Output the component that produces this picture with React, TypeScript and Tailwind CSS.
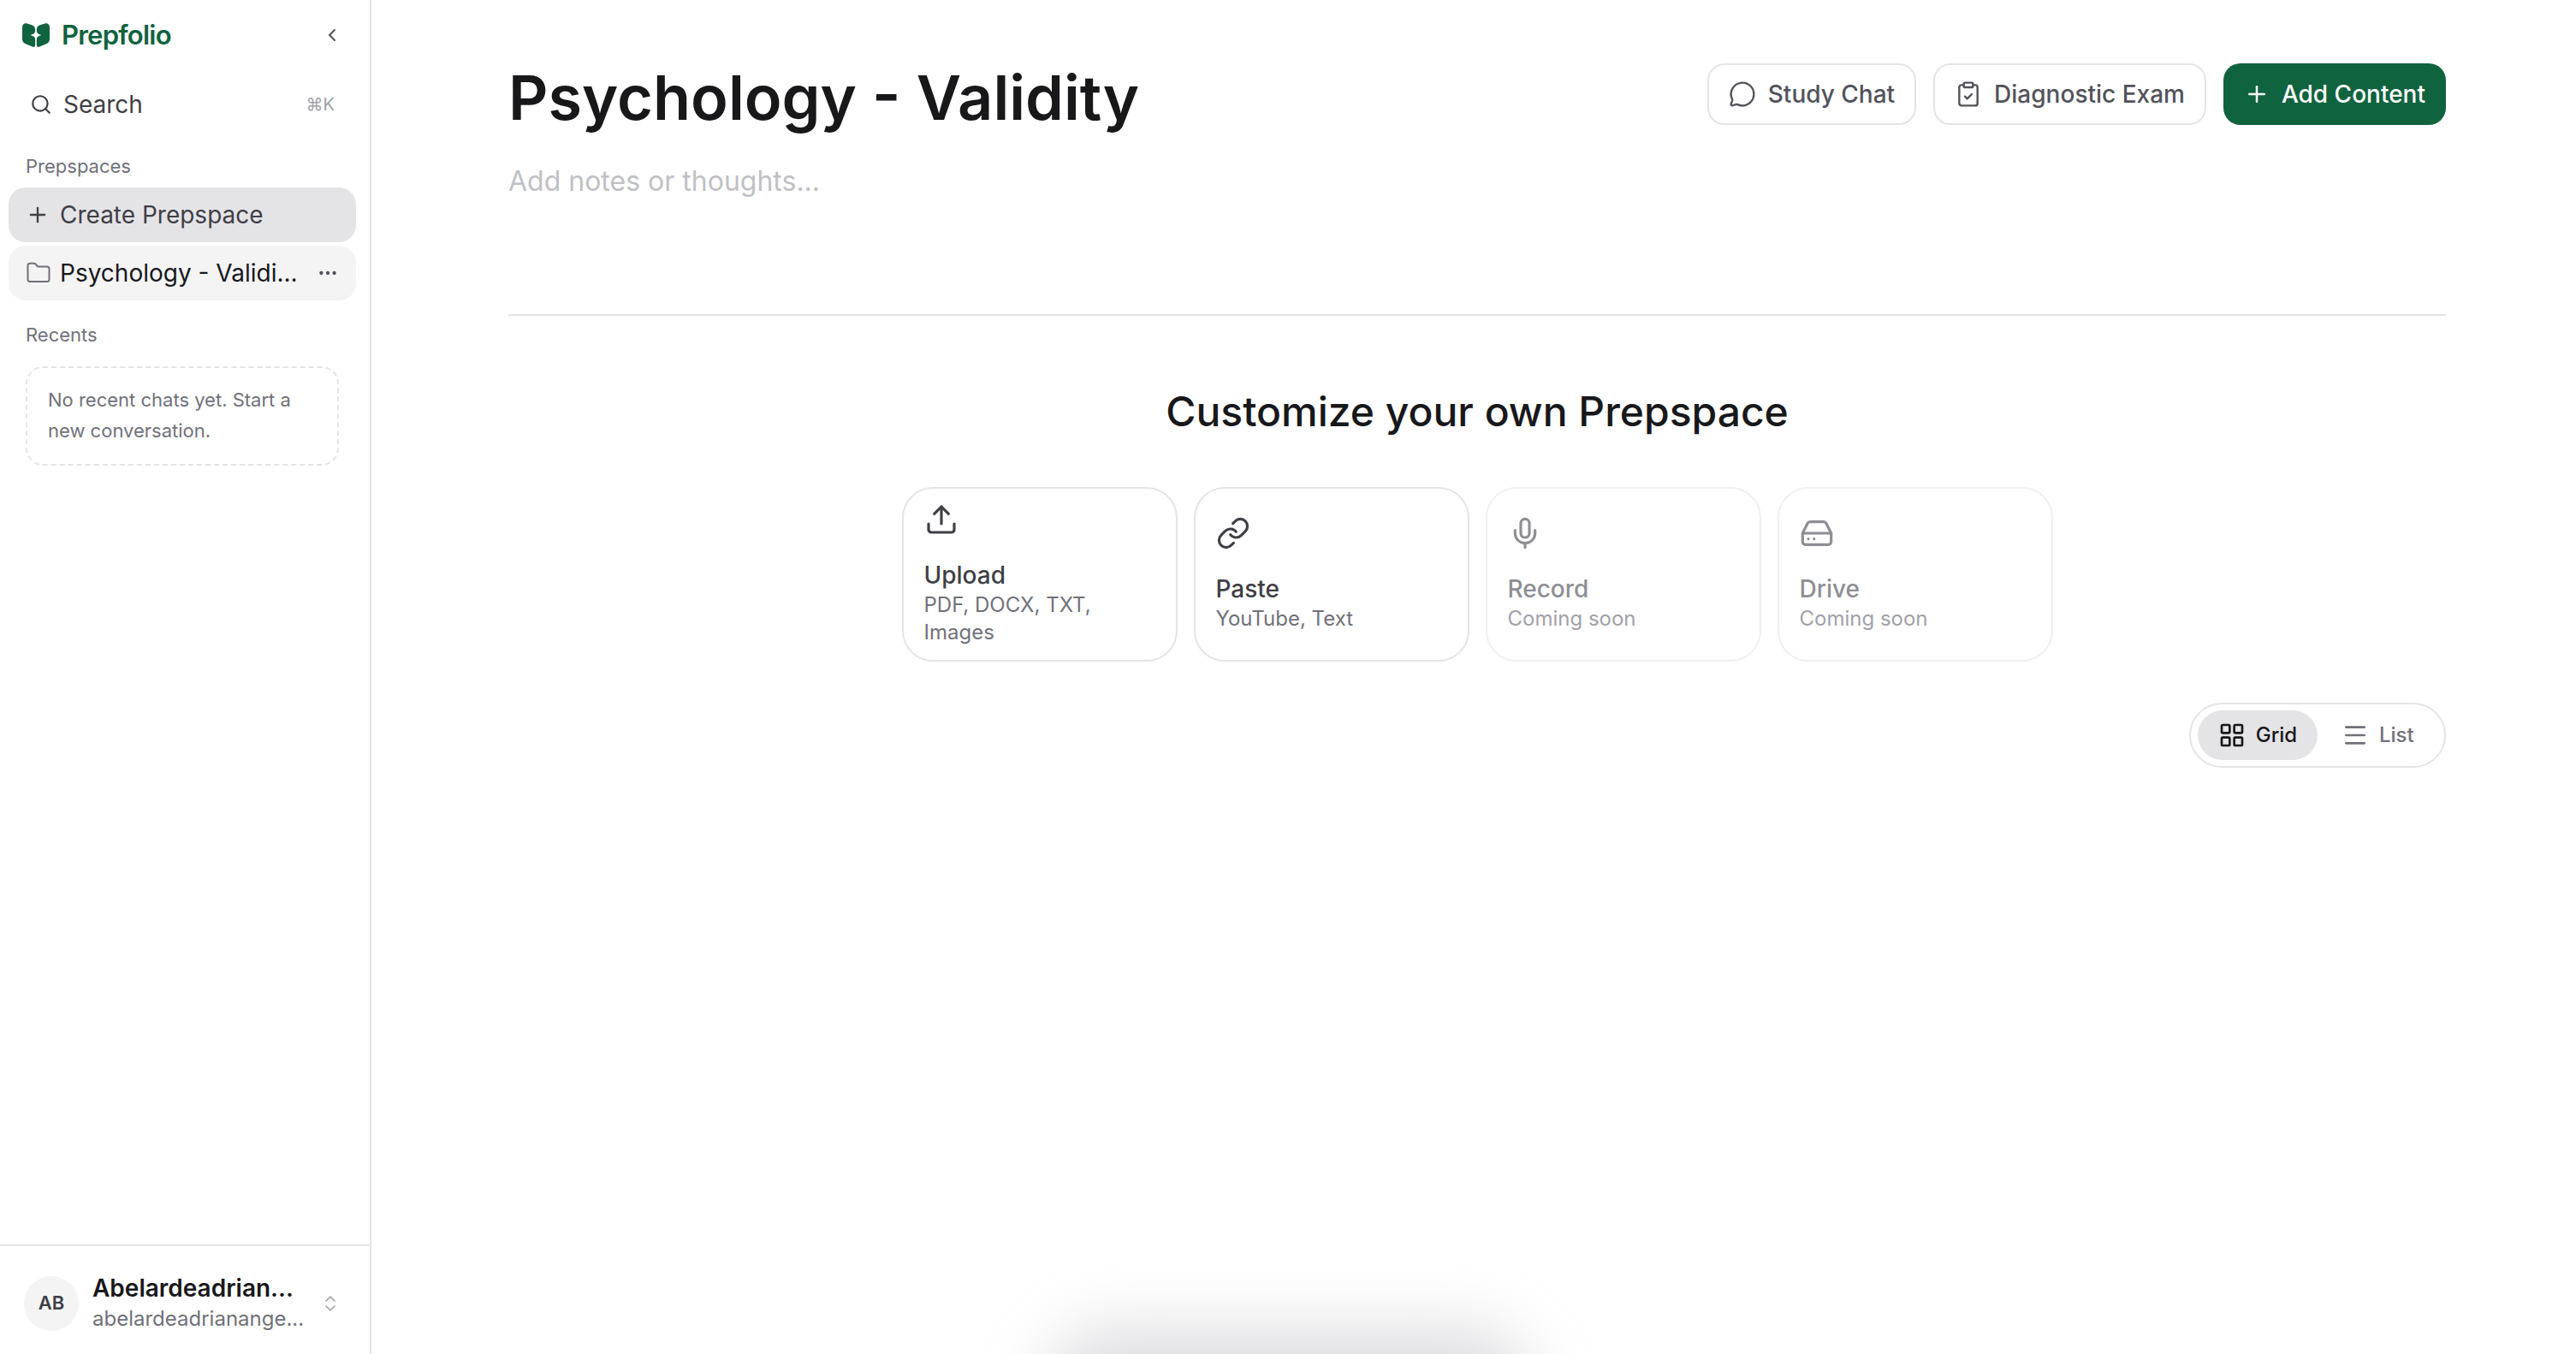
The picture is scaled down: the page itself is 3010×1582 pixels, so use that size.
import {
  ChevronLeft, ChevronsUpDown, ClipboardCheck, Ellipsis, Folder, HardDrive, LayoutGrid,
  Link, Menu, MessageCircle, Mic, Plus, Search, Upload,
} from 'lucide-react';
import type { ReactNode } from 'react';

function Logo() {
  return (
    <svg width="32" height="28" viewBox="0 0 32 28" className="shrink-0">
      <path d="M0 5C0 1.500 2.500-.3 5.500.5l5 1.500C13.500 2.900 15.200 4.800 15.200 7.500V25.500c0 2-1.500 2.900-3.400 2.100L3.800 24.200C1.300 23.100 0 21.200 0 18.500z" fill="#10633f" />
      <path d="M32 5c0-3.500-2.500-5.300-5.500-4.500l-5 1.500c-3 .9-4.700 2.800-4.700 5.500V25.500c0 2 1.500 2.900 3.400 2.100l8-3.400c2.500-1.100 3.800-3 3.800-5.700z" fill="#10633f" />
      <path d="M16 7.500c.7 3.900 2.200 5.400 6.500 6.500-4.300 1.100-5.800 2.600-6.500 6.500-.7-3.900-2.200-5.400-6.500-6.500 4.300-1.100 5.800-2.600 6.500-6.500z" fill="#fff" />
    </svg>
  );
}

function Sidebar() {
  return (
    <aside className="w-[434px] shrink-0 h-full flex flex-col border-r-2 border-[#e4e4e7]">
      <div className="flex items-center h-[82px] pl-[26px] pr-[32px]">
        <Logo />
        <span className="ml-[14px] text-[31px] font-semibold tracking-[-0.75px] text-[#10633f]">Prepfolio</span>
        <ChevronLeft className="ml-auto" size={24} strokeWidth={2} color="#52525b" />
      </div>
      <div className="flex items-center h-[80px] pl-[35px] pr-[41px]">
        <Search size={26} strokeWidth={2} color="#3f3f46" />
        <span className="ml-[13px] text-[28px] text-[#3f3f46]">Search</span>
        <span className="ml-auto text-[20px] text-[#a1a1aa]">⌘K</span>
      </div>
      <div className="pl-[30px] mt-[16px] text-[22px] leading-[32px] text-[#71717a]">Prepspaces</div>
      <div className="mx-[10px] mt-[9px] flex flex-col gap-[4px] w-[406px]">
        <div className="h-[64px] rounded-[20px] bg-[#e4e4e7] flex items-center pl-[20px] text-[#3f3f46]">
          <Plus size={28} strokeWidth={2} />
          <span className="ml-[12px] text-[28px]">Create Prepspace</span>
        </div>
        <div className="h-[64px] rounded-[20px] bg-[#f4f4f5] flex items-center pl-[20px] pr-[20px] text-[#18181b]">
          <Folder size={30} strokeWidth={1.6} color="#71717a" />
          <span className="ml-[10px] text-[28px]">Psychology - Validi...</span>
          <Ellipsis className="ml-auto" size={26} strokeWidth={2} color="#52525b" />
        </div>
      </div>
      <div className="pl-[30px] mt-[24px] text-[22px] leading-[32px] text-[#71717a]">Recents</div>
      <div className="mx-[30px] mt-[21px] h-[116px] w-[366px] rounded-[20px] border-2 border-dashed border-[#e4e4e7] pl-[24px] pt-[19px] text-[22px] leading-[36px] text-[#71717a]">
        No recent chats yet. Start a
        <br />
        new conversation.
      </div>
      <div className="mt-auto h-[128px] border-t-2 border-[#e4e4e7] flex items-center pl-[28px] pr-[34px] pt-[7px]">
        <div className="w-[64px] h-[64px] rounded-full bg-[#f4f4f5] flex items-center justify-center text-[22px] font-semibold text-[#3f3f46]">AB</div>
        <div className="ml-[16px] flex flex-col pt-[1px]">
          <span className="text-[28px] leading-[36px] font-semibold text-[#18181b]">Abelardeadrian...</span>
          <span className="text-[24px] leading-[36px] text-[#71717a]">abelardeadrianange...</span>
        </div>
        <ChevronsUpDown className="ml-auto" size={24} strokeWidth={1.6} color="#a1a1aa" />
      </div>
    </aside>
  );
}

function HeaderButton({ icon, label, primary }: { icon: ReactNode; label: string; primary?: boolean }) {
  return (
    <div
      className={
        primary
          ? 'h-[72px] rounded-[20px] bg-[#10633f] text-white flex items-center px-[24px] gap-[14px] text-[28px] font-medium'
          : 'h-[72px] rounded-[20px] border-2 border-[#e4e4e7] bg-white text-[#52525b] flex items-center px-[23px] gap-[14px] text-[28px] font-medium'
      }
    >
      {icon}
      <span>{label}</span>
    </div>
  );
}

function SourceCard({ icon, title, sub, disabled }: { icon: ReactNode; title: string; sub: ReactNode; disabled?: boolean }) {
  return (
    <div
      className={
        disabled
          ? 'w-[322px] h-[204px] rounded-[36px] border-2 border-[#f0f0f1] pl-[24px] pr-[20px] flex flex-col justify-center'
          : 'w-[322px] h-[204px] rounded-[36px] border-2 border-[#e4e4e7] pl-[24px] pr-[20px] flex flex-col justify-center'
      }
    >
      <div className={disabled ? 'text-[#8e8e95] mb-[27px]' : 'text-[#3f3f46] mb-[27px]'}>{icon}</div>
      <div className={disabled ? 'text-[28px] leading-[36px] font-medium text-[#8e8e95]' : 'text-[28px] leading-[36px] font-medium text-[#3f3f46]'}>{title}</div>
      <div className={disabled ? 'mt-[1px] text-[24px] leading-[32px] text-[#a1a1aa]' : 'mt-[1px] text-[24px] leading-[32px] text-[#71717a]'}>{sub}</div>
    </div>
  );
}

export default function App() {
  return (
    <div className="relative w-[3010px] h-[1582px] overflow-hidden bg-white flex font-['Inter',sans-serif]">
      <Sidebar />
      <main className="flex-1 min-w-0 pl-[160px] pr-[152px] pt-[74px]">
        <div className="flex items-start justify-between">
          <div>
            <h1 className="text-[72px] leading-[80px] font-semibold text-[#18181b]">Psychology - Validity</h1>
            <p className="mt-[36px] text-[32px] leading-[44px] text-[#c0c0c5]">Add notes or thoughts...</p>
          </div>
          <div className="flex gap-[20px]">
            <HeaderButton icon={<MessageCircle size={32} strokeWidth={1.8} />} label="Study Chat" />
            <HeaderButton icon={<ClipboardCheck size={32} strokeWidth={1.8} />} label="Diagnostic Exam" />
            <HeaderButton primary icon={<Plus size={30} strokeWidth={2} />} label="Add Content" />
          </div>
        </div>
        <div className="mt-[133px] h-[2px] bg-[#e4e4e7]" />
        <h2 className="mt-[86px] text-center text-[48px] leading-[52px] font-medium text-[#18181b]">Customize your own Prepspace</h2>
        <div className="mt-[62px] flex justify-center gap-[19px]">
          <SourceCard icon={<Upload size={40} strokeWidth={1.9} />} title="Upload" sub={<>PDF, DOCX, TXT,<br />Images</>} />
          <SourceCard icon={<Link size={40} strokeWidth={1.9} />} title="Paste" sub="YouTube, Text" />
          <SourceCard disabled icon={<Mic size={40} strokeWidth={1.9} />} title="Record" sub="Coming soon" />
          <SourceCard disabled icon={<HardDrive size={40} strokeWidth={1.9} />} title="Drive" sub="Coming soon" />
        </div>
        <div className="mt-[48px] flex justify-end">
          <div className="h-[76px] w-[300px] rounded-full border-2 border-[#e4e4e7] flex items-center pl-[8px]">
            <div className="h-[58px] w-[140px] rounded-full bg-[#e4e4e7] flex items-center justify-center gap-[12px] text-[#18181b]">
              <LayoutGrid size={32} strokeWidth={2} />
              <span className="text-[24px] font-medium">Grid</span>
            </div>
            <div className="flex items-center ml-[28px] gap-[12px] text-[#71717a]">
              <Menu size={32} strokeWidth={2} />
              <span className="text-[24px] font-medium">List</span>
            </div>
          </div>
        </div>
      </main>
      <div className="absolute left-[1270px] top-[1600px] w-[470px] h-[60px] rounded-full bg-[#d4d4d8] shadow-[0_0_70px_50px_rgba(212,212,216,0.75)]" />
    </div>
  );
}
